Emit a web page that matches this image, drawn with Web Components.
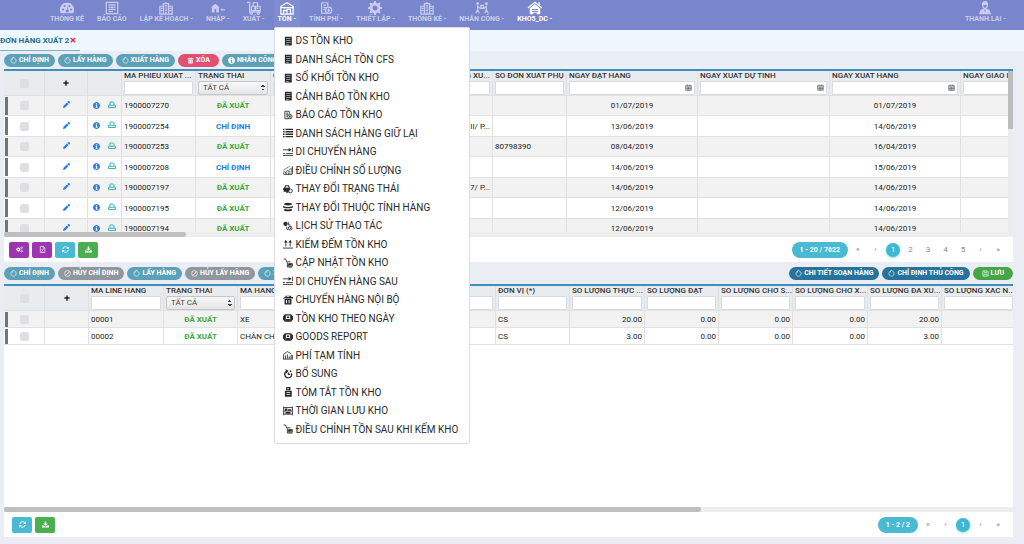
<!DOCTYPE html>
<html lang="vi">
<head>
<meta charset="utf-8">
<title>Đơn hàng xuất</title>
<style>
    html, body { height: 100%; }
    body {
        margin: 0;
        background: #eaedf3;
        color: #333;
        font-family: Roboto, "Noto Sans", sans-serif;
        font-size: 8px;
        overflow: hidden;
    }
</style>
</head>
<body>
<wms-app></wms-app>

<script>
// 16x16 icons. "f" shapes are filled, "s" shapes are stroked.
const ICONS = {
    gauge: '<path class="f" fill-rule="evenodd" d="M8 2a8 8 0 0 0-7 12h14A8 8 0 0 0 8 2zM3.500 8.500a1.200 1.200 0 1 0 .01 0zM5.300 4.500a1.200 1.200 0 1 0 .01 0zM10.700 4.500a1.200 1.200 0 1 0 .01 0zM12.700 8.500a1.200 1.200 0 1 0 .01 0zM8.600 5l-.5 4.600a1.700 1.700 0 1 0 1 .2z"/>',
    doc: '<path class="s" d="M1.500 1.500h13v13h-13zM4 4.500h8M4 7h8M4 9.500h8M4 12h5"/>',
    building: '<path class="s" d="M1 15V6h4V3h6v3h4v9zM5 6v9M11 6v9M8 1v2"/><path class="s" d="M2 8.500h2M2 11h2M6.500 5.500h3M6.500 8h3M6.500 10.500h3M12 8.500h2M12 11h2M8 12v3"/>',
    inbound: '<path class="f" fill-rule="evenodd" d="M5 3L0 7.500h1V13h3V9h2v4h3V7.500h1zM11 10l2-2v1.300h3v1.400h-3V12z"/>',
    trolley: '<path class="s" d="M0 1.500h3v11h13"/><circle class="s" cx="5" cy="14" r="1.300"/><circle class="s" cx="13" cy="14" r="1.300"/><path class="s" d="M5 6h4v5H5zM10 6h5v5h-5zM7 2h5v4H7zM12 7v2"/>',
    warehouse: '<path class="s" d="M1 15V6l7-4 7 4v9zM1 7.500h14M4 15v-4h4v4M8 15V9.500h4V15M5 9h1"/>',
    fee: '<path class="s" d="M3 2h7v4M9 14H3V2M5 5h3M5 7.500h3M5 10h2"/><circle class="s" cx="11" cy="10.500" r="3.500"/><path class="s" d="M11 8.500v4M9.700 10.500h2.600"/>',
    gear: '<path class="f" fill-rule="evenodd" d="M7 0h2l.5 2.200 1.600.7L13 1.700 14.400 3l-1.200 2 .6 1.500 2.200.5v2l-2.200.5-.6 1.600 1.200 1.900-1.400 1.400-1.900-1.200-1.600.6L9 16H7l-.5-2.200-1.600-.6L3 14.400 1.600 13l1.200-1.900-.6-1.600L0 9V7l2.200-.5L2.800 5 1.600 3 3 1.700l1.900 1.200 1.600-.7zM8 5a3 3 0 1 0 .01 0z"/>',
    workers: '<circle class="f" cx="3" cy="3" r="1.600"/><circle class="f" cx="13" cy="3" r="1.600"/><path class="s" d="M3 5v5l-2 4M3 10l2 4M13 5v5l2 4M13 10l-2 4M3 6l3 2.500h4L13 6M6.500 5h3v3h-3z"/>',
    house: '<path class="s" d="M0 8l8-6.500L16 8"/><path class="f" fill-rule="evenodd" d="M2 8.500l6-5 6 5V15H2zM4.500 9v1.300h7V9zM4.500 11.300v1.200h7v-1.200zM6 13.500V15h4v-1.500zM12 1.500h1.500V5L12 4z"/>',
    user: '<path class="f" fill-rule="evenodd" d="M8 0a3.600 3.600 0 0 0-3.600 4L5 7l1.700 1.700L3 10l-2 5h14l-2-5-3.700-1.300L11 7l.6-3A3.600 3.600 0 0 0 8 0zM6 4.500h4L9.400 7 8 7.800 6.600 7zM7 10h2l-1 3z"/>',
    server: '<path class="f" fill-rule="evenodd" d="M3 1h11v14H3zM5 3.500v.9h7v-.9zM5 6.800v.9h7v-.9zM5 10v.9h7V10zM5 12.800v.7h4v-.7z"/>',
    list: '<path class="f" d="M0 1h2.500v2.200H0zM4 1h12v2.200H4zM0 4.900h2.500v2.200H0zM4 4.900h12v2.200H4zM0 8.800h2.500V11H0zM4 8.800h12V11H4zM0 12.700h2.500v2.200H0zM4 12.700h12v2.200H4z"/>',
    move: '<path class="s" d="M0 4.500h12M0 10.500h3M5 10.500h11M0 13.500h16M15 1v7"/><path class="f" d="M9 1.500L13.500 4.500 9 7.500z"/>',
    bars: '<path class="s" stroke-dasharray="2 1" d="M1 14v-3h3v4M6 14V9h3v6M11 14V6h3v8M1 8l5-3 5-3"/><path class="s" d="M15 2v12M1 15h14"/>',
    cars: '<path class="f" fill-rule="evenodd" d="M0 9V7l2-1 1.500-4h6L11 6v3L9 11H5v1.500H1V9zM4.500 3.500L4 6h5l-.7-2.500z"/><circle class="s" cx="12" cy="11" r="3"/><path class="f" d="M5 11h4v3H5z"/>',
    layers: '<path class="f" d="M2 2.500Q8 0 14 2.500v2Q8 7 2 4.500zM0 6.500Q8 9.500 16 6.500v2.300Q8 11.500 0 8.800zM2 10.800q6 2 12 0v3q-6 2.200-12 0z"/>',
    history: '<circle class="f" cx="4" cy="4.500" r="3.500"/><path class="s" d="M9 2v4.500h3"/><circle class="s" cx="11.500" cy="11.500" r="3"/><path class="s" d="M6 9v4l2 1M11.500 10v2h1.500"/>',
    count: '<path class="s" d="M0 14.500h16M4.500 3v9M11.500 3v9"/><path class="f" d="M1.500 5.500l3-4 3 4zM8.500 5.500l3-4 3 4z"/>',
    update: '<path class="s" d="M1 1.500h3L7 8v6.500h8M7 6h5M9 9h6v4H9z"/><path class="f" d="M9 9h5v3H9z"/>',
    boxes: '<path class="f" fill-rule="evenodd" d="M1 4l3-1V1h9v2h3v2.500H0zM2.500 6.500h11V15h-11zM5 8v5h1.500V8zM9 8v5h1.500V8zM6 2v1h4V2z"/>',
    box: '<path class="f" fill-rule="evenodd" d="M3 2h10l3 3.500v5L13 14H3L0 10.500v-5zM4.500 4v8h7V4zM6 5.500h4V8H6zM5 9.500h6V12H5z"/>',
    chart: '<path class="s" d="M1 14.500V7l6-4.500L13 6M0 14.500h16M4 14V9M7 14V7M10 14v-4M13 14V8.500h2V14"/>',
    refill: '<path class="s" style="stroke-width:2" d="M13.500 7A5.500 5.500 0 1 1 5 4.200M8.500 9V5.500M8.500 9l3-1"/><path class="f" d="M4 0l5 3-4 4zM11 1l3 3-3 1z"/>',
    summary: '<path class="f" fill-rule="evenodd" d="M5 0h7v5H5zM3 6h11v9.500H3zM5.500 8v1.300h6V8zM5.500 11v1.500h6V11zM7 1.500v2h2v-2z"/>',
    shelf: '<path class="s" d="M1 1v14M15 1v14M1 8h14M1 13h14M1 2.500h14"/><path class="f" d="M3 4h4v3.500H3zM8 5h5v2.500H8zM4 9.500h8v3H4z"/>',
    circle: '<path class="s" d="M6 2.500A6 6 0 1 0 10 2.500M6 2.500V6M10 2.500L9 1H6"/>',
    ban: '<circle class="s" cx="8" cy="8" r="6.500"/><path class="s" d="M3.500 12.500l9-9M6 11l5-5"/>',
    trash: '<path class="f" fill-rule="evenodd" d="M1.500 3H6V1.500h4V3h4.500v2h-13zM3 6h10v9H3zM5.500 7.500v6h1v-6zM9.500 7.500v6h1v-6z"/>',
    info: '<path class="f" fill-rule="evenodd" d="M8 0a8 8 0 1 0 .01 0zM6.500 3h3v2.500h-3zM6 7h3.500v4.500h1V13H6v-1.500h1v-3H6z"/>',
    print: '<path class="s" style="stroke-width:2" d="M4 8V2h6.500L12 3.500V8M1 13V8.500h14V13z"/>',
    pencil: '<path class="f" d="M0 16l1.200-5L9 3.300l3.700 3.700L5 14.800zM10 2.200L12 0q1-.5 2 0l2 2q.5 1 0 2l-2.200 2z"/>',
    plus: '<path class="f" d="M6 1h4v5h5v4h-5v5H6v-5H1V6h5z"/>',
    calendar: '<path class="s" d="M1.500 3.500h13v11h-13zM1.500 6.500h13M5 6.500v8M8.200 6.500v8M11.500 6.500v8M1.500 10.500h13M5 .5v3M11 .5v3"/>',
    cogs: '<circle class="s" style="stroke-width:3" cx="5.500" cy="8" r="3.200"/><circle class="s" cx="13" cy="4" r="2"/><circle class="s" cx="13" cy="12" r="2"/>',
    excel: '<path class="s" d="M3 1h7l3.500 3.500V15H3zM9.500 1v4h4M6 7l4 6M10 7l-4 6"/>',
    refresh: '<path class="s" style="stroke-width:2" d="M2 7a6.200 6.200 0 0 1 11-3M14 9a6.200 6.200 0 0 1-11 3"/><path class="f" d="M15.500 1v6H9.500zM.5 15V9h6z"/>',
    download: '<path class="f" d="M6.300 1h3.400v5H13L8 11 3 6h3.300zM0 10h4l4 3 4-3h4v5H0z"/>',
    save: '<path class="s" d="M2 2h10l2 2v10H2zM5 2v4h6V2M4.500 14V9.500h7V14"/>',
    close: '<path class="f" d="M3 1l5 4 5-4 2 2-4 5 4 5-2 2-5-4-5 4-2-2 4-5-4-5z"/>'
};

const icon = (name, size = 8) => `<wms-icon name="${name}" style="--size:${size}px"></wms-icon>`;

class WmsElement extends HTMLElement {
    connectedCallback() {
        if (!this.shadowRoot) {
            this.attachShadow({ mode: 'open' });
        }
        this.shadowRoot.innerHTML = this.template();
    }
}

class WmsIcon extends WmsElement {
    template() {
        return `
            <style>
                :host { display: inline-block; width: var(--size); height: var(--size); flex: none; }
                svg { display: block; width: 100%; height: 100%; overflow: visible; }
                .f { fill: currentColor; }
                .s { fill: none; stroke: currentColor; stroke-width: 1.400; }
            </style>
            <svg viewBox="0 0 16 16" aria-hidden="true">${ICONS[this.getAttribute('name')]}</svg>
        `;
    }
}

class NavItem extends WmsElement {
    template() {
        return `
            <style>
                :host { display: block; color: #c9cef0; }
                :host([active]) { color: #fff; background: #7f8ccf; }
                :host([current]) { color: #fff; }
                a {
                    display: flex;
                    flex-direction: column;
                    align-items: center;
                    padding: 1px 6px 6px;
                    color: inherit;
                    font-size: 7px;
                    font-weight: 700;
                    line-height: 9px;
                    text-decoration: none;
                    white-space: nowrap;
                }
                :host([active]) a { padding: 1px 4px 6px; }
            </style>
            <a href="#">${icon(this.getAttribute('icon'), 14)}<slot></slot></a>
        `;
    }
}

class DropMenu extends WmsElement {
    template() {
        const items = [
            ['server', 'DS TỒN KHO'],
            ['server', 'DANH SÁCH TỒN CFS'],
            ['server', 'SỐ KHỐI TỒN KHO'],
            ['server', 'CẢNH BÁO TỒN KHO'],
            ['fee', 'BÁO CÁO TỒN KHO'],
            ['list', 'DANH SÁCH HÀNG GIỮ LẠI'],
            ['move', 'DI CHUYỂN HÀNG'],
            ['bars', 'ĐIỀU CHỈNH SỐ LƯỢNG'],
            ['cars', 'THAY ĐỔI TRẠNG THÁI'],
            ['layers', 'THAY ĐỔI THUỘC TÍNH HÀNG'],
            ['history', 'LỊCH SỬ THAO TÁC'],
            ['count', 'KIỂM ĐẾM TỒN KHO'],
            ['update', 'CẬP NHẬT TỒN KHO'],
            ['move', 'DI CHUYỂN HÀNG SAU'],
            ['boxes', 'CHUYỂN HÀNG NỘI BỘ'],
            ['box', 'TỒN KHO THEO NGÀY'],
            ['box', 'GOODS REPORT'],
            ['chart', 'PHÍ TẠM TÍNH'],
            ['refill', 'BỔ SUNG'],
            ['summary', 'TÓM TẮT TỒN KHO'],
            ['shelf', 'THỜI GIAN LƯU KHO'],
            ['update', 'ĐIỀU CHỈNH TỒN SAU KHI KẾM KHO']
        ];
        return `
            <style>
                :host {
                    display: block;
                    box-sizing: border-box;
                    width: 196px;
                    padding: 3px 8px 5px;
                    border: 1px solid #dcdde2;
                    border-radius: 2px;
                    background: #fff;
                }
                a {
                    display: flex;
                    align-items: center;
                    gap: 3px;
                    height: 19px;
                    color: #2a2a2a;
                    font-size: 10px;
                    text-decoration: none;
                    white-space: nowrap;
                }
                a:nth-child(even) { height: 18px; }
            </style>
            <nav>${items.map(([name, text]) => `<a href="#">${icon(name, 10)}${text}</a>`).join('')}</nav>
        `;
    }
}

class AppHeader extends WmsElement {
    template() {
        return `
            <style>
                :host {
                    display: flex;
                    justify-content: space-between;
                    height: 30px;
                    padding: 0 12px 0 44px;
                    background: #7986cb;
                }
                nav { display: flex; gap: 1px; }
                .open { position: relative; margin: 0 2px; }
                drop-menu { position: absolute; top: 27px; left: 0; z-index: 10; }
            </style>
            <nav>
                <nav-item icon="gauge">THỐNG KÊ</nav-item>
                <nav-item icon="doc">BÁO CÁO</nav-item>
                <nav-item icon="building">LẬP KẾ HOẠCH -</nav-item>
                <nav-item icon="inbound">NHẬP -</nav-item>
                <nav-item icon="trolley">XUẤT -</nav-item>
                <div class="open">
                    <nav-item icon="warehouse" active>TỒN -</nav-item>
                    <drop-menu></drop-menu>
                </div>
                <nav-item icon="fee">TÍNH PHÍ -</nav-item>
                <nav-item icon="gear">THIẾT LẬP -</nav-item>
                <nav-item icon="building">THỐNG KÊ -</nav-item>
                <nav-item icon="workers">NHÂN CÔNG -</nav-item>
                <nav-item icon="house" current>KHO5_DC -</nav-item>
            </nav>
            <nav-item icon="user">THANH.LAI -</nav-item>
        `;
    }
}

class TabStrip extends WmsElement {
    template() {
        return `
            <style>
                :host { display: flex; height: 21px; background: #eef6fe; }
                .tab {
                    display: flex;
                    align-items: center;
                    gap: 1px;
                    box-sizing: border-box;
                    width: 80px;
                    border-bottom: 1px solid #7fb0c4;
                    color: #1f6f93;
                    font-weight: 700;
                    white-space: nowrap;
                }
                a { color: inherit; text-decoration: none; }
                button { display: flex; padding: 0; border: 0; background: none; color: #dc2f4f; }
            </style>
            <div class="tab">
                <a href="#">ĐƠN HÀNG XUẤT 2</a>
                <button aria-label="Đóng">${icon('close', 6)}</button>
            </div>
        `;
    }
}

class PillButton extends WmsElement {
    template() {
        return `
            <style>
                :host { display: block; flex: none; --fill: #5ba1b7; }
                :host([kind="danger"]) { --fill: #e0516f; }
                :host([kind="muted"]) { --fill: #90989e; }
                :host([kind="dark"]) { --fill: #27739c; }
                :host([kind="save"]) { --fill: #45a648; }
                button {
                    display: flex;
                    align-items: center;
                    gap: 2px;
                    height: 13px;
                    padding: 0 6px;
                    border: 0;
                    border-radius: 7px;
                    background: var(--fill);
                    color: #fff;
                    font: 700 7px/9px Roboto, "Noto Sans", sans-serif;
                    white-space: nowrap;
                }
                :host([kind="danger"]) button, :host([kind="save"]) button { padding: 0 9px; }
            </style>
            <button>${icon(this.getAttribute('icon') || 'circle', 7)}<slot></slot></button>
        `;
    }
}

class ToolBar extends WmsElement {
    template() {
        return `
            <style>
                :host { display: flex; align-items: center; gap: 3px; height: 18px; }
                :host([tall]) { height: 22px; }
                .end { display: flex; gap: 3px; margin-left: auto; }
            </style>
            <slot></slot>
            <div class="end"><slot name="end"></slot></div>
        `;
    }
}

class SquareButton extends WmsElement {
    template() {
        return `
            <style>
                :host { display: block; }
                button {
                    display: flex;
                    align-items: center;
                    justify-content: center;
                    width: 20px;
                    height: 16px;
                    padding: 0;
                    border: 0;
                    border-radius: 2px;
                    background: var(--fill);
                    color: #fff;
                }
            </style>
            <button aria-label="${this.getAttribute('label')}">${icon(this.getAttribute('icon'), 7)}</button>
        `;
    }
}

class PageBar extends WmsElement {
    template() {
        const marks = ['«', '‹', ...this.getAttribute('pages').split(','), '›', '»'];
        return `
            <style>
                :host { display: flex; align-items: center; gap: 3px; font-size: 7px; }
                .range {
                    padding: 0 8px;
                    border-radius: 8px;
                    background: #4ab9d2;
                    color: #fff;
                    font-weight: 700;
                    line-height: 16px;
                }
                nav { display: flex; justify-content: space-between; width: 154px; }
                :host([short]) nav { width: 84px; }
                button {
                    width: 14px;
                    height: 14px;
                    padding: 0;
                    border: 0;
                    border-radius: 50%;
                    background: none;
                    color: #888;
                    font: 8px/14px Roboto, sans-serif;
                }
                .on { background: #3fb8d3; color: #fff; box-shadow: 0 1px 3px #9adbe8; }
            </style>
            <span class="range">${this.getAttribute('range')}</span>
            <nav>${marks.map(m => `<button${m === '1' ? ' class="on"' : ''}>${m}</button>`).join('')}</nav>
        `;
    }
}

class DataGrid extends WmsElement {
    headCell(col) {
        if (col.type === 'mark') return '<th></th>';
        if (col.type === 'check') return '<th><input type="checkbox" aria-label="Chọn tất cả"></th>';
        if (col.type === 'edit') return `<th><button aria-label="Thêm">${icon('plus', 6)}</button></th>`;
        if (col.type === 'tools') return '<th></th>';
        const filter = col.type === 'status'
            ? '<select><option>TẤT CẢ</option></select>'
            : `<input type="text">${col.type === 'date' ? icon('calendar', 7) : ''}`;
        return `<th><label class="${col.tail ? 'tail' : ''}"><span>${col.title}</span>${filter}</label></th>`;
    }

    bodyCell(col, value = '') {
        switch (col.type) {
            case 'mark': return '<td><i></i></td>';
            case 'check': return '<td><input type="checkbox" aria-label="Chọn dòng"></td>';
            case 'edit': return `<td class="mid">${this.hasAttribute('plain') ? '' : `<button class="blue" aria-label="Sửa">${icon('pencil', 7)}</button>`}</td>`;
            case 'tools': return `<td class="mid"><button class="blue" aria-label="Chi tiết">${icon('info', 7)}</button><button class="teal" aria-label="In">${icon('print', 8)}</button></td>`;
            case 'status': return `<td class="mid ${value === 'ĐÃ XUẤT' ? 'done' : 'assigned'}">${value}</td>`;
            case 'date': return `<td class="mid">${value}</td>`;
            case 'number': return `<td class="end">${value}</td>`;
            default: return `<td class="${col.tail ? 'end' : ''}">${value}</td>`;
        }
    }

    template() {
        const { cols, rows } = GRIDS[this.getAttribute('source')];
        const width = cols.reduce((sum, col) => sum + col.w, 0);
        return `
            <style>
                :host {
                    display: grid;
                    grid-template-columns: minmax(0, 1fr) auto;
                    grid-template-rows: minmax(0, 1fr) auto;
                    border-top: 2px solid #3c8fbf;
                    background: #fff;
                }
                .view { overflow: hidden; }
                table { width: ${width}px; border-collapse: separate; border-spacing: 0; table-layout: fixed; }
                th, td { box-sizing: border-box; padding: 0 2px; border-right: 1px solid #dfe0e2; border-bottom: 1px solid #e0e1e3; }
                th:first-child, td:first-child { padding: 0; border-right: 0; }
                th { height: 25px; background: #e9ecef; font-weight: 500; }
                td { height: var(--odd, 20px); overflow: hidden; font-size: 8px; line-height: 9px; color: #222; white-space: nowrap; }
                tr:nth-child(even) td { height: var(--even, 21px); }
                tbody tr:nth-child(odd) { background: #f2f2f2; }
                label { position: relative; display: flex; flex-direction: column; gap: 1px; padding-top: 1px; }
                label span {
                    overflow: hidden;
                    min-height: 6px;
                    margin-right: -4px;
                    padding-bottom: 1px;
                    line-height: 6px;
                    text-align: left;
                    white-space: nowrap;
                }
                .tail span { margin-right: 0; text-align: right; }
                label wms-icon { position: absolute; right: 3px; bottom: 4px; color: #555; }
                input[type="text"], select {
                    box-sizing: border-box;
                    width: 100%;
                    height: 14px;
                    margin: 0;
                    border: 1px solid #d8dadd;
                    border-radius: 1px;
                    background: #fff;
                    font: 8px Roboto, sans-serif;
                }
                select {
                    appearance: none;
                    padding: 0 4px;
                    border-color: #c4c6c8;
                    border-radius: 2px;
                    color: #444;
                    background:
                        linear-gradient(to bottom right, transparent 50%, #444 50%) right 4px top 3px / 2px 2px no-repeat,
                        linear-gradient(to bottom left, transparent 50%, #444 50%) right 2px top 3px / 2px 2px no-repeat,
                        linear-gradient(to top right, transparent 50%, #444 50%) right 4px bottom 3px / 2px 2px no-repeat,
                        linear-gradient(to top left, transparent 50%, #444 50%) right 2px bottom 3px / 2px 2px no-repeat,
                        linear-gradient(#f8f8f8, #e4e5e6);
                }
                input[type="checkbox"] {
                    appearance: none;
                    display: block;
                    width: 9px;
                    height: 9px;
                    margin: 0 0 0 10px;
                    border-radius: 2px;
                    background: #dddfe3;
                }
                button { padding: 0; border: 0; background: none; color: #222; line-height: 0; }
                button + button { margin-left: 8px; }
                i { display: block; width: 3px; height: calc(var(--odd, 20px) - 2px); margin-left: 1px; background: #71757a; }
                .mid { text-align: center; }
                .end { text-align: right; }
                .blue { color: #2f7de1; }
                .teal { color: #3db3b8; }
                .done { color: #3aa83f; font-weight: 700; }
                .assigned { color: #1e7bea; font-weight: 700; }
                .down { width: 5px; background: #ececf0; }
                .down b { display: block; width: 5px; height: 58px; background: #bdbdbd; }
                :host([plain]) .down { display: none; }
                .across { grid-column: 1 / -1; height: 5px; background: #eee; }
                .across b { display: block; width: var(--thumb); height: 5px; border-radius: 2px; background: #bfbfbf; }
            </style>
            <div class="view">
                <table>
                    <colgroup>${cols.map(col => `<col style="width:${col.w}px">`).join('')}</colgroup>
                    <thead><tr>${cols.map(col => this.headCell(col)).join('')}</tr></thead>
                    <tbody>
                        ${rows.map(row => `<tr>${cols.map(col => this.bodyCell(col, row[col.key])).join('')}</tr>`).join('')}
                    </tbody>
                </table>
            </div>
            <div class="down"><b></b></div>
            <div class="across"><b></b></div>
        `;
    }
}

const GRIDS = {
    orders: {
        cols: [
            { type: 'mark', w: 4 },
            { type: 'check', w: 37 },
            { type: 'edit', w: 43 },
            { type: 'tools', w: 34 },
            { key: 'code', title: 'MÃ PHIẾU XUẤT ...', w: 74 },
            { key: 'status', title: 'TRẠNG THÁI', type: 'status', w: 75 },
            { title: 'C', w: 73 },
            { title: '', w: 74 },
            { key: 'note', title: 'G XU...', tail: true, w: 75 },
            { key: 'sub', title: 'SỐ ĐƠN XUẤT PHỤ', w: 74 },
            { key: 'ordered', title: 'NGÀY ĐẶT HÀNG', type: 'date', w: 131 },
            { key: 'planned', title: 'NGÀY XUẤT DỰ TÍNH', type: 'date', w: 132 },
            { key: 'shipped', title: 'NGÀY XUẤT HÀNG', type: 'date', w: 131 },
            { key: 'delivered', title: 'NGÀY GIAO HÀNG', type: 'date', w: 131 }
        ],
        rows: [
            { code: '1900007270', status: 'ĐÃ XUẤT', ordered: '01/07/2019', shipped: '01/07/2019' },
            { code: '1900007254', status: 'CHỈ ĐỊNH', note: 'II/ P...', ordered: '13/06/2019', shipped: '14/06/2019' },
            { code: '1900007253', status: 'ĐÃ XUẤT', sub: '80798390', ordered: '08/04/2019', shipped: '16/04/2019' },
            { code: '1900007208', status: 'CHỈ ĐỊNH', ordered: '14/06/2019', shipped: '15/06/2019' },
            { code: '1900007197', status: 'ĐÃ XUẤT', note: '7/ P...', ordered: '14/06/2019', shipped: '14/06/2019' },
            { code: '1900007195', status: 'ĐÃ XUẤT', ordered: '12/06/2019', shipped: '14/06/2019' },
            { code: '1900007194', status: 'ĐÃ XUẤT', ordered: '12/06/2019', shipped: '14/06/2019' }
        ]
    },
    lines: {
        cols: [
            { type: 'mark', w: 4 },
            { type: 'check', w: 37 },
            { type: 'edit', w: 44 },
            { key: 'line', title: 'MÃ LINE HÀNG', w: 75 },
            { key: 'status', title: 'TRẠNG THÁI', type: 'status', w: 74 },
            { key: 'item', title: 'MÃ HÀNG', w: 74 },
            { title: '', w: 92 },
            { title: '', w: 92 },
            { key: 'unit', title: 'ĐƠN VỊ (*)', w: 74 },
            { key: 'real', title: 'SỐ LƯỢNG THỰC ...', type: 'number', w: 75 },
            { key: 'booked', title: 'SỐ LƯỢNG ĐẶT', type: 'number', w: 74 },
            { key: 'waitPick', title: 'SỐ LƯỢNG CHỜ S...', type: 'number', w: 74 },
            { key: 'waitShip', title: 'SỐ LƯỢNG CHỜ X...', type: 'number', w: 75 },
            { key: 'shipped', title: 'SỐ LƯỢNG ĐÃ XU...', type: 'number', w: 74 },
            { key: 'confirmed', title: 'SỐ LƯỢNG XÁC N...', type: 'number', w: 74 }
        ],
        rows: [
            { line: '00001', status: 'ĐÃ XUẤT', item: 'XE', unit: 'CS', real: '20.00', booked: '0.00', waitPick: '0.00', waitShip: '0.00', shipped: '20.00' },
            { line: '00002', status: 'ĐÃ XUẤT', item: 'CHÂN CH', unit: 'CS', real: '3.00', booked: '0.00', waitPick: '0.00', waitShip: '0.00', shipped: '3.00' }
        ]
    }
};

class WmsApp extends WmsElement {
    template() {
        return `
            <style>
                :host { display: flex; flex-direction: column; height: 100vh; }
                main { flex: 1; min-height: 0; display: flex; flex-direction: column; padding: 0 11px 7px 4px; }
                .orders { height: 166px; }
                .lines { flex: 1; min-height: 0; --odd: 17px; --even: 17px; }
                footer {
                    display: flex;
                    align-items: center;
                    gap: 3px;
                    height: 25px;
                    padding: 0 8px 0 5px;
                    background: #fff;
                }
                .lines + footer { padding-left: 8px; }
                page-bar { margin-left: auto; }
            </style>
            <app-header></app-header>
            <tab-strip></tab-strip>
            <main>
                <tool-bar>
                    <pill-button>CHỈ ĐỊNH</pill-button>
                    <pill-button>LẤY HÀNG</pill-button>
                    <pill-button>XUẤT HÀNG</pill-button>
                    <pill-button kind="danger" icon="trash">XÓA</pill-button>
                    <pill-button icon="info">NHÂN CÔNG</pill-button>
                </tool-bar>
                <data-grid class="orders" source="orders" style="--thumb:182px"></data-grid>
                <footer>
                    <square-button icon="cogs" label="Cấu hình" style="--fill:#9c36b0"></square-button>
                    <square-button icon="excel" label="Xuất Excel" style="--fill:#9c36b0"></square-button>
                    <square-button icon="refresh" label="Tải lại" style="--fill:#4ab9d2"></square-button>
                    <square-button icon="download" label="Tải xuống" style="--fill:#4bae4f"></square-button>
                    <page-bar range="1 - 20 / 7622" pages="1,2,3,4,5"></page-bar>
                </footer>
                <tool-bar tall>
                    <pill-button>CHỈ ĐỊNH</pill-button>
                    <pill-button kind="muted" icon="ban">HỦY CHỈ ĐỊNH</pill-button>
                    <pill-button>LẤY HÀNG</pill-button>
                    <pill-button kind="muted" icon="ban">HỦY LẤY HÀNG</pill-button>
                    <pill-button>XUẤT HÀNG</pill-button>
                    <pill-button slot="end" kind="dark">CHI TIẾT SOẠN HÀNG</pill-button>
                    <pill-button slot="end" kind="dark">CHỈ ĐỊNH THỦ CÔNG</pill-button>
                    <pill-button slot="end" kind="save" icon="save">LƯU</pill-button>
                </tool-bar>
                <data-grid class="lines" source="lines" plain style="--thumb:697px"></data-grid>
                <footer>
                    <square-button icon="refresh" label="Tải lại" style="--fill:#4ab9d2"></square-button>
                    <square-button icon="download" label="Tải xuống" style="--fill:#4bae4f"></square-button>
                    <page-bar range="1 - 2 / 2" pages="1" short></page-bar>
                </footer>
            </main>
        `;
    }
}

customElements.define('wms-icon', WmsIcon);
customElements.define('nav-item', NavItem);
customElements.define('drop-menu', DropMenu);
customElements.define('app-header', AppHeader);
customElements.define('tab-strip', TabStrip);
customElements.define('pill-button', PillButton);
customElements.define('tool-bar', ToolBar);
customElements.define('square-button', SquareButton);
customElements.define('page-bar', PageBar);
customElements.define('data-grid', DataGrid);
customElements.define('wms-app', WmsApp);
</script>
</body>
</html>
